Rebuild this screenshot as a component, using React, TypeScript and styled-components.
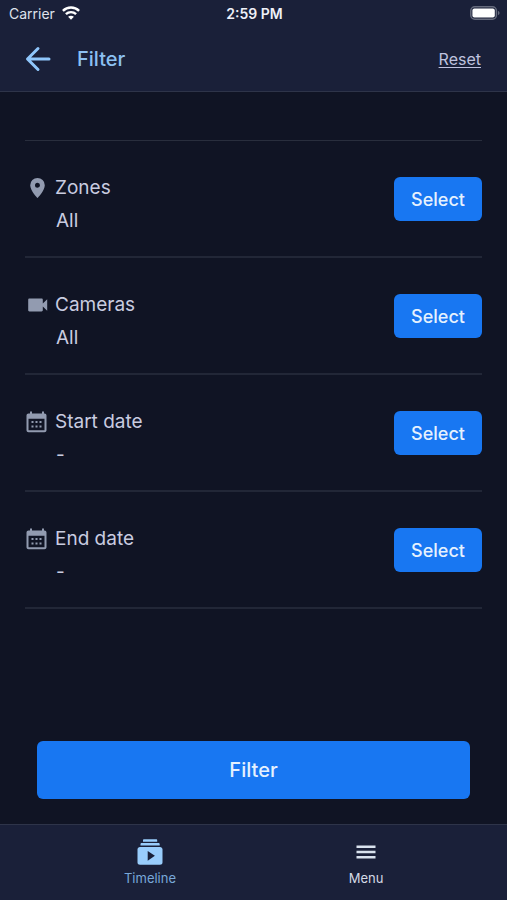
import React from "react";
import styled, { createGlobalStyle } from "styled-components";

const GlobalStyle = createGlobalStyle`
  * { box-sizing: border-box; }
  body { margin: 0; background: #101424; }
  button, a { font-family: inherit; }
`;

const Screen = styled.div`
  display: flex;
  flex-direction: column;
  min-height: 100vh;
  background: #101424;
  color: #c9cce0;
  font-family: Inter, "Liberation Sans", sans-serif;
`;

const Header = styled.header`
  background: #1a2039;
  border-bottom: 1px solid #2e3449;
`;

const StatusBar = styled.div`
  display: grid;
  grid-template-columns: 1fr auto 1fr;
  align-items: center;
  height: 26px;
  padding: 0 7px 0 9px;
  font-size: 14px;
  color: #dfe2ec;
`;

const Carrier = styled.span`
  display: flex;
  align-items: center;
  gap: 7px;
`;

const Clock = styled.time`
  font-weight: 600;
  color: #eef0f8;
`;

const BatterySlot = styled.span`
  display: flex;
  justify-content: flex-end;
`;

const TitleBar = styled.div`
  display: flex;
  align-items: center;
  height: 65px;
  padding: 0 26px 0 24px;
`;

const BackButton = styled.button`
  display: flex;
  padding: 0;
  border: 0;
  background: none;
  color: #8fc6fb;
  cursor: pointer;
`;

const Title = styled.h1`
  flex: 1;
  margin: 0 0 0 25px;
  font-size: 20px;
  line-height: 24px;
  font-weight: 500;
  color: #8cc0f2;
`;

const ResetLink = styled.a`
  font-size: 16px;
  line-height: 24px;
  color: #bfc2df;
  text-decoration: underline;
  text-underline-offset: 2px;
`;

const Content = styled.main`
  display: flex;
  flex: 1;
  flex-direction: column;
  justify-content: space-between;
  gap: 24px;
  padding: 48px 25px 25px;
`;

const FilterList = styled.ul`
  margin: 0;
  padding: 0;
  list-style: none;
  border-top: 1px solid #292e3d;
`;

const FilterRow = styled.li`
  display: flex;
  align-items: flex-start;
  justify-content: space-between;
  height: 117px;
  padding-top: 35px;
  border-bottom: 2px solid #222737;
`;

const FilterInfo = styled.div`
  display: grid;
  grid-template-columns: 24px auto;
  column-gap: 6px;
  row-gap: 9px;
  align-items: center;
  font-size: 19px;
  line-height: 24px;
`;

const IconSlot = styled.span`
  display: flex;
  color: #929bb0;
`;

const FilterValue = styled.span`
  grid-column: 2;
  padding-left: 1px;
`;

const PrimaryButton = styled.button<{ $large?: boolean }>`
  height: ${(p) => (p.$large ? 58 : 44)}px;
  margin: ${(p) => (p.$large ? "0 12px" : "1px 0 0")};
  padding: 0 16px;
  border: 0;
  border-radius: 6px;
  background: #1877f2;
  color: #e5f1fe;
  font-size: ${(p) => (p.$large ? 20 : 18)}px;
  font-weight: 500;
  min-width: 88px;
  cursor: pointer;
`;

const TabBar = styled.nav`
  display: grid;
  grid-template-columns: 1fr 1fr;
  height: 76px;
  padding: 0 33px 0 42px;
  background: #1a2039;
  border-top: 1px solid #2e3449;
`;

const Tab = styled.a<{ $active?: boolean }>`
  display: flex;
  flex-direction: column;
  align-items: center;
  gap: 3px;
  padding-top: 13px;
  color: ${(p) => (p.$active ? "#78a8d8" : "#d5dae5")};
  font-size: 13px;
  line-height: 18px;
  text-decoration: none;
`;

const WifiIcon = () => (
  <svg width="18" height="14" viewBox="0 0 18 14" aria-hidden="true">
    <g fill="none" stroke="#fff" strokeWidth="2.4">
      <path d="M.9 4.8C5.4.4 12.6.4 17.1 4.8" />
      <path d="M3.9 8.2c2.9-2.8 7.3-2.8 10.2 0" />
    </g>
    <path fill="#fff" d="M9 13.7 6.1 10.800c1.6-1.500 4.200-1.500 5.800 0z" />
  </svg>
);

const BatteryIcon = () => (
  <svg width="30" height="14" viewBox="0 0 30 14" role="img" aria-label="Battery full">
    <rect x=".8" y=".8" width="25.6" height="12.4" rx="4" fill="none" stroke="#666b7d" strokeWidth="1.5" />
    <rect x="2.4" y="2.4" width="22.4" height="9.2" rx="2" fill="#fff" />
    <path d="M28 5c2 .6 2 3.400 0 4z" fill="#666b7d" />
  </svg>
);

const BackIcon = () => (
  <svg width="28" height="28" viewBox="0 0 28 28" fill="none" stroke="currentColor" strokeWidth="3" strokeLinecap="round" strokeLinejoin="round" aria-hidden="true">
    <path d="M14 3.500 3.500 14 14 24.500M4 14h21" />
  </svg>
);

const PinIcon = () => (
  <svg width="24" height="24" viewBox="0 0 24 24" fill="currentColor" aria-hidden="true">
    <path d="M12.500 2A7.300 7.300 0 0 0 5.200 9.200C5.200 14.500 12.500 22 12.500 22s7.300-7.500 7.300-12.800A7.300 7.300 0 0 0 12.500 2zm0 9.700a2.500 2.500 0 1 1 0-5 2.500 2.500 0 0 1 0 5z" />
  </svg>
);

const CameraIcon = () => (
  <svg width="24" height="24" viewBox="0 0 24 24" fill="currentColor" aria-hidden="true">
    <path d="M17.800 10.500V6.700c0-.7-.5-1.200-1.200-1.200H4.400c-.7 0-1.200.5-1.200 1.200v10.600c0 .7.5 1.200 1.200 1.200h12.200c.7 0 1.200-.5 1.200-1.200v-3.800l4.400 4.300V6.200z" />
  </svg>
);

const CalendarIcon = () => (
  <svg width="24" height="24" viewBox="0 0 24 24" fill="currentColor" aria-hidden="true">
    <path fillRule="evenodd" d="M5 1.500h2v2h10v-2h2v2h.5c1.100 0 2 .9 2 2v14.700c0 1.100-.9 2-2 2h-16c-1.100 0-2-.9-2-2V5.500c0-1.100.9-2 2-2H5zM3.500 8.700v11.500h16V8.700z" />
    <path d="M6.500 11h2v2h-2zm4 0h2v2h-2zm4 0h2v2h-2zM6.500 15.500h2v2h-2zm4 0h2v2h-2zm4 0h2v2h-2z" />
  </svg>
);

const TimelineIcon = () => (
  <svg width="26" height="28" viewBox="0 0 26 28" aria-hidden="true">
    <path fill="#99cdfc" fillRule="evenodd" d="M6 2.200c0-.6.500-1 1.100-1h12.100c.6 0 1 .4 1 1v1.500H6zM3.500 6.300c0-.8.500-1.300 1.300-1.300h16.600c.7 0 1.300.5 1.300 1.300v1.200H3.500zM3 8.900h20c1.400 0 2.500 1 2.500 2.300v13.200c0 1.300-1.100 2.300-2.500 2.300H3c-1.400 0-2.500-1-2.500-2.300V11.200c0-1.300 1.100-2.300 2.500-2.300zm7.700 4v9.800l7.200-4.900z" />
  </svg>
);

const MenuIcon = () => (
  <svg width="26" height="28" viewBox="0 0 26 28" fill="#d9e2ee" aria-hidden="true">
    <path d="M3.500 7.500h19V10h-19zM3.500 12.700h19v2.500h-19zM3.500 18h19v2.500h-19z" />
  </svg>
);

const filters = [
  { label: "Zones", value: "All", Icon: PinIcon },
  { label: "Cameras", value: "All", Icon: CameraIcon },
  { label: "Start date", value: "-", Icon: CalendarIcon },
  { label: "End date", value: "-", Icon: CalendarIcon },
];

export default function App() {
  return (
    <Screen>
      <GlobalStyle />
      <Header>
        <StatusBar>
          <Carrier>Carrier <WifiIcon /></Carrier>
          <Clock>2:59 PM</Clock>
          <BatterySlot><BatteryIcon /></BatterySlot>
        </StatusBar>
        <TitleBar>
          <BackButton aria-label="Back"><BackIcon /></BackButton>
          <Title>Filter</Title>
          <ResetLink href="#reset">Reset</ResetLink>
        </TitleBar>
      </Header>
      <Content>
        <FilterList>
          {filters.map(({ label, value, Icon }) => (
            <FilterRow key={label}>
              <FilterInfo>
                <IconSlot><Icon /></IconSlot>
                <span>{label}</span>
                <FilterValue>{value}</FilterValue>
              </FilterInfo>
              <PrimaryButton aria-label={`Select ${label}`}>Select</PrimaryButton>
            </FilterRow>
          ))}
        </FilterList>
        <PrimaryButton $large>Filter</PrimaryButton>
      </Content>
      <TabBar>
        <Tab href="#timeline" $active aria-current="page">
          <TimelineIcon />
          Timeline
        </Tab>
        <Tab href="#menu">
          <MenuIcon />
          Menu
        </Tab>
      </TabBar>
    </Screen>
  );
}
